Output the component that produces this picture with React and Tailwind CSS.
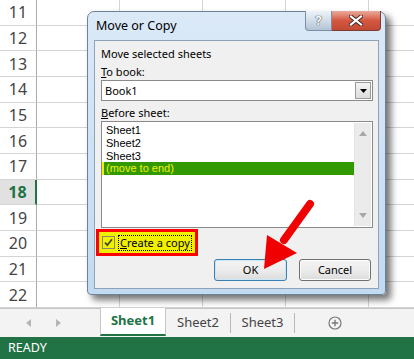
import React from "react";

const rows = [11, 12, 13, 14, 15, 16, 17, 18, 19, 20, 21, 22];

function RowHeader({ n }) {
  if (n === 18) {
    return (
      <div className="w-[37px] shrink-0 flex items-center justify-center bg-[#e1e1e1] border-r-2 border-r-[#217346] border-b border-b-[#d4d4d4] text-[16px] font-bold text-[#217346]">
        {n}
      </div>
    );
  }
  return (
    <div className="w-[37px] shrink-0 flex items-center justify-center border-r border-r-[#ababab] border-b border-b-[#d4d4d4] text-[16px] text-[#444444]">
      {n}
    </div>
  );
}

function Sheet() {
  return (
    <div className="flex flex-col h-[308px] overflow-hidden shrink-0">
      {rows.map((n) => (
        <div key={n} className="flex h-[25.67px] shrink-0">
          <RowHeader n={n} />
          <div className="w-[83px] shrink-0 border-r border-b border-[#d4d4d4]" />
          <div className="w-[83px] shrink-0 border-r border-b border-[#d4d4d4]" />
          <div className="w-[83px] shrink-0 border-r border-b border-[#d4d4d4]" />
          <div className="w-[83px] shrink-0 border-r border-b border-[#d4d4d4]" />
          <div className="w-[83px] shrink-0 border-b border-[#d4d4d4]" />
        </div>
      ))}
    </div>
  );
}

function TabBar() {
  return (
    <div className="h-[29px] shrink-0 flex bg-[#f3f3f3] border-t border-[#c6c6c6] text-[13px]">
      <div className="w-[100px] shrink-0 flex items-center">
        <svg width="100" height="28" viewBox="0 0 100 28">
          <polygon points="31,10 31,18 26,14" fill="#b4b4b4" />
          <polygon points="56,10 56,18 61,14" fill="#b4b4b4" />
        </svg>
      </div>
      <div className="w-[66px] shrink-0 -mt-px h-[28px] bg-white border-x border-[#c6c6c6] border-b-2 border-b-[#217346] flex items-center justify-center font-bold text-[#217346]">
        Sheet1
      </div>
      <div className="w-[65px] shrink-0 flex items-center">
        <span className="flex-1 text-center text-[#444444]">Sheet2</span>
        <span className="w-px h-[20px] bg-[#b8b8b8]" />
      </div>
      <div className="w-[64px] shrink-0 flex items-center">
        <span className="flex-1 text-center text-[#444444]">Sheet3</span>
        <span className="w-px h-[20px] bg-[#b8b8b8]" />
      </div>
      <div className="pl-[33px] flex items-center">
        <svg width="14" height="14" viewBox="0 0 14 14">
          <circle cx="7" cy="7" r="6" fill="none" stroke="#7a7a7a" strokeWidth="1.2" />
          <path d="M7 3.8V10.2M3.8 7H10.2" stroke="#7a7a7a" strokeWidth="1.4" />
        </svg>
      </div>
    </div>
  );
}

function StatusBar() {
  return (
    <div className="h-[22px] shrink-0 bg-[#217346] flex items-center pl-[8px] text-[12.5px] text-white">
      READY
    </div>
  );
}

function Dialog() {
  return (
    <div className="absolute left-[87px] top-[11px] w-[299px] h-[284px] rounded-t-[7px] rounded-b-[4px] border border-[#6e8396] bg-gradient-to-b from-[#dbe9f7] to-[#c2daf2] shadow-[5px_5px_7px_rgba(0,0,0,0.55)] flex flex-col" style={{ fontFamily: '"Noto Sans", sans-serif' }}>
      {/* title bar */}
      <div className="relative h-[28px] shrink-0 flex items-center pl-[8px] text-[12.5px] text-black">
        Move or Copy
        <div className="absolute right-[4px] top-[-1px] flex">
          <div className="w-[27px] h-[20px] rounded-bl-[4px] border border-[#7b8ea3] border-t-0 bg-gradient-to-b from-[#eef3f9] via-[#d1dde9] to-[#b3c3d4] flex items-center justify-center text-[13px] font-bold text-white [text-shadow:0_0_1px_#333,0_0_1px_#333]">
            ?
          </div>
          <div className="w-[49px] h-[20px] rounded-br-[4px] border border-[#7d3b32] border-t-0 border-l-0 bg-gradient-to-b from-[#e9a99c] via-[#d5573f] to-[#c14a35] flex items-center justify-center">
            <svg width="14" height="11" viewBox="0 0 14 11">
              <path d="M2 1.5L12 9.5M12 1.5L2 9.5" stroke="#3a2a28" strokeWidth="4" strokeLinecap="square" />
              <path d="M2 1.5L12 9.5M12 1.5L2 9.5" stroke="#ffffff" strokeWidth="2.2" strokeLinecap="square" />
            </svg>
          </div>
        </div>
      </div>
      {/* client */}
      <div className="mx-[6px] h-[249px] shrink-0 border border-[#8ea3b8] bg-[#f0f0f0] flex flex-col pl-[6px] pr-[5px] text-[11px] text-black leading-[14px]">
        <div className="mt-[6px] h-[14px]">Move selected sheets</div>
        <div className="mt-[4px] h-[14px]">
          <span className="underline">T</span>o book:
        </div>
        <div className="mt-[1px] h-[21px] flex border border-[#8a8a8a] bg-white">
          <div className="flex-1 flex items-center pl-[3px]">Book1</div>
          <div className="w-[16px] my-[1px] mr-[1px] border border-[#9a9a9a] bg-gradient-to-b from-[#f4f4f4] to-[#dcdcdc] flex items-center justify-center">
            <svg width="7" height="4" viewBox="0 0 7 4">
              <polygon points="0,0 7,0 3.5,4" fill="#000" />
            </svg>
          </div>
        </div>
        <div className="mt-[5px] h-[14px]">
          <span className="underline">B</span>efore sheet:
        </div>
        <div className="mt-[1px] h-[107px] flex border border-[#8a8a8a] bg-white">
          <div className="flex-1 flex flex-col pt-[2px] leading-[12px] text-[11px] font-['Liberation_Sans',sans-serif]">
            <div className="h-[12.67px] pl-[4px] flex items-center">Sheet1</div>
            <div className="h-[12.67px] pl-[4px] flex items-center">Sheet2</div>
            <div className="h-[12.67px] pl-[4px] flex items-center">Sheet3</div>
            <div className="h-[12.67px] pl-[2px] bg-[#339900] border-l-2 border-l-[#f2f200] text-[#f2f200] flex items-center">(move to end)</div>
          </div>
          <div className="w-[17px] my-[1px] mr-[1px] bg-[#ebebeb] border-l border-[#e3e3e3] flex flex-col items-center justify-between py-[8px]">
            <svg width="8" height="5" viewBox="0 0 8 5">
              <polygon points="0,5 8,5 4,0" fill="#a8a8a8" />
            </svg>
            <svg width="8" height="5" viewBox="0 0 8 5">
              <polygon points="0,0 8,0 4,5" fill="#a8a8a8" />
            </svg>
          </div>
        </div>
        <div className="mt-[1px] -ml-[5px] w-[102px] h-[27px] border-[3px] border-[#ff0000] bg-[#f0f000] flex items-center pl-[3px]">
          <svg width="13" height="13" viewBox="0 0 13 13">
            <rect x="0.5" y="0.5" width="12" height="12" fill="none" stroke="#8a8a6a" />
            <path d="M3 6.5L5.3 9.2L10 3.2" fill="none" stroke="#3b4a10" strokeWidth="1.8" />
          </svg>
          <span className="ml-[3px] px-[1px] border border-dotted border-black leading-[14px]">
            <span className="underline">C</span>reate a copy
          </span>
        </div>
        <div className="mt-[3px] flex justify-end gap-[12px] pr-[2px]">
          <div className="w-[73px] h-[22px] rounded-[3px] border border-[#3c7fb1] bg-gradient-to-b from-[#f4f4f4] via-[#ececec] to-[#dcdcdc] shadow-[inset_0_0_0_1px_#c9e7f7] flex items-center justify-center">
            OK
          </div>
          <div className="w-[72px] h-[22px] rounded-[3px] border border-[#707070] bg-gradient-to-b from-[#f4f4f4] via-[#ececec] to-[#dcdcdc] shadow-[inset_0_0_0_1px_#fcfcfc] flex items-center justify-center">
            Cancel
          </div>
        </div>
      </div>
    </div>
  );
}

function Arrow() {
  return (
    <svg className="absolute left-0 top-0 pointer-events-none" width="414" height="359" viewBox="0 0 414 359">
      <line x1="310" y1="204" x2="284" y2="240" stroke="#f00000" strokeWidth="8" strokeLinecap="round" />
      <polygon points="264,269 267,235 297,253" fill="#f00000" />
    </svg>
  );
}

export default function App() {
  return (
    <div className="relative w-[414px] h-[359px] overflow-hidden bg-white flex flex-col" style={{ fontFamily: '"Noto Sans", sans-serif' }}>
      <Sheet />
      <TabBar />
      <StatusBar />
      <Dialog />
      <Arrow />
    </div>
  );
}
